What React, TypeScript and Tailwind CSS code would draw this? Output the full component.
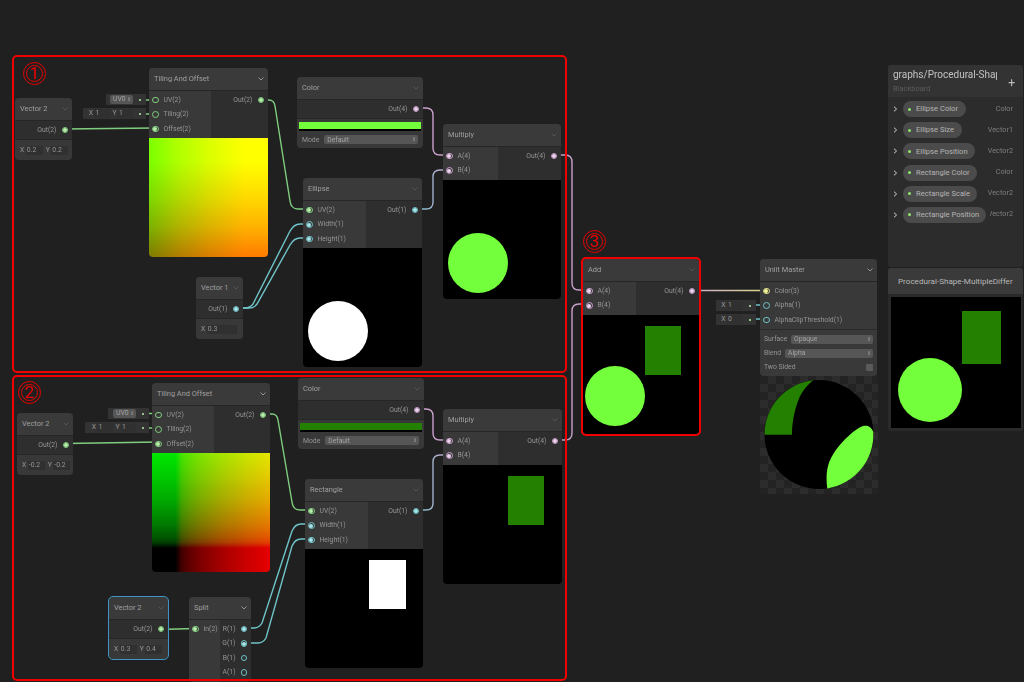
import type { ReactNode } from 'react';

type PortColor = 'green' | 'cyan' | 'pink' | 'yellow';
type PortDef = { label: string; color: PortColor; on?: boolean };

const ringClass: Record<PortColor, string> = {
    green: 'border-[#7fce7f]',
    cyan: 'border-[#6fc4c9]',
    pink: 'border-[#c9a0cc]',
    yellow: 'border-[#d8d884]',
};

const dotClass: Record<PortColor, string> = {
    green: 'bg-[#b7f0a8]',
    cyan: 'bg-[#a5e6ea]',
    pink: 'bg-[#eed2f0]',
    yellow: 'bg-[#f5f59a]',
};

function Port({ color, on }: { color: PortColor; on?: boolean }) {
    return (
        <span className={`flex h-[6.5px] w-[6.5px] shrink-0 items-center justify-center rounded-full border ${ringClass[color]}`}>
            {on && <span className={`h-[4px] w-[4px] rounded-full ${dotClass[color]}`} />}
        </span>
    );
}

function PortRow({ port, side }: { port: PortDef; side: 'in' | 'out' }) {
    return (
        <div className={`flex h-[14.4px] items-center gap-[5px] ${side === 'in' ? 'pl-[3px]' : 'justify-end pr-[4px]'}`}>
            {side === 'in' && <Port color={port.color} on={port.on} />}
            <span className="whitespace-nowrap">{port.label}</span>
            {side === 'out' && <Port color={port.color} on={port.on} />}
        </div>
    );
}

function Chevron({ dim }: { dim?: boolean }) {
    return (
        <svg width="6" height="4" viewBox="0 0 6 4" className={`shrink-0 ${dim ? 'text-[#5c5c5c]' : 'text-[#a8a8a8]'}`}>
            <path d="M0.5 0.5 L3 3 L5.5 0.5" fill="none" stroke="currentColor" strokeWidth="0.8" />
        </svg>
    );
}

function Node({
    title,
    className,
    leftWidth,
    inputs = [],
    outputs = [],
    dim,
    children,
}: {
    title: string;
    className: string;
    leftWidth?: string;
    inputs?: PortDef[];
    outputs?: PortDef[];
    dim?: boolean;
    children?: ReactNode;
}) {
    return (
        <div className={`absolute overflow-hidden rounded-[4px] bg-[#2e2e2e] text-[6.8px] text-[#969696] ${className}`}>
            <div className="flex h-[22px] items-center justify-between bg-[#3a3a3a] pl-[5px] pr-[4px] text-[7.4px] text-[#a0a0a0]">
                <span className="whitespace-nowrap">{title}</span>
                <Chevron dim={dim} />
            </div>
            <div className="flex border-t border-[#262626]">
                {inputs.length > 0 && (
                    <div className={`shrink-0 bg-[#393939] py-[2px] ${leftWidth ?? ''}`}>
                        {inputs.map((p) => (
                            <PortRow key={p.label} port={p} side="in" />
                        ))}
                    </div>
                )}
                <div className="min-w-0 flex-1 py-[2px]">
                    {outputs.map((p) => (
                        <PortRow key={p.label} port={p} side="out" />
                    ))}
                </div>
            </div>
            {children}
        </div>
    );
}

function NumField({ label, value, width }: { label: string; value: string; width: string }) {
    return (
        <div className="flex items-center gap-[1.5px]">
            <span>{label}</span>
            <span className={`flex h-[9px] items-center bg-[#303030] pl-[1px] ${width}`}>{value}</span>
        </div>
    );
}

function VectorProps({ fields, width }: { fields: [string, string][]; width: string }) {
    return (
        <div className="flex h-[21px] items-center gap-[3px] border-t border-[#262626] bg-[#383838] pl-[5px]">
            {fields.map(([label, value]) => (
                <NumField key={label} label={label} value={value} width={width} />
            ))}
        </div>
    );
}

function InlineInput({ className, children }: { className: string; children: ReactNode }) {
    return (
        <div className={`absolute flex h-[11px] items-center justify-end gap-[2px] bg-[#333333] pr-[5px] text-[6.8px] text-[#969696] ${className}`}>
            {children}
            <span className="ml-[4px] h-[2px] w-[2px] rounded-full bg-[#b7f0a8]" />
        </div>
    );
}

function Dropdown({ label, className }: { label: string; className: string }) {
    return (
        <div className={`flex h-[9px] items-center justify-between rounded-[2px] bg-[#565656] pl-[3px] pr-[2px] text-[6.8px] text-[#a4a4a4] ${className}`}>
            <span>{label}</span>
            <span className="text-[5px] leading-none">⇕</span>
        </div>
    );
}

function ColorBody({ bar }: { bar: string }) {
    return (
        <div className="border-t border-[#262626] bg-[#383838] px-[2px] pt-[3px]">
            <div className={`box-content h-[7px] border-b-2 border-black ${bar}`} />
            <div className="flex h-[17px] items-center gap-[5px] pl-[3px]">
                <span>Mode</span>
                <Dropdown label="Default" className="w-[94px]" />
            </div>
        </div>
    );
}

function Badge({ n, className }: { n: string; className: string }) {
    return (
        <div className={`absolute flex h-[23px] w-[23px] items-center justify-center rounded-full border-[4px] border-double border-[#e80000] text-[17px] leading-none text-[#f00000] ${className}`}>
            {n}
        </div>
    );
}

function RedBox({ className }: { className: string }) {
    return <div className={`pointer-events-none absolute rounded-[5px] border-2 border-[#f00000] ${className}`} />;
}

// node width varies by a px or two, the node clips the extra
function ShapePreview({ children }: { children: ReactNode }) {
    return (
        <svg width="120" height="119" viewBox="0 0 120 119" className="block bg-black">
            {children}
        </svg>
    );
}

function Wires() {
    return (
        <svg className="absolute left-0 top-0" width="1024" height="682" fill="none" strokeWidth="1.4" strokeLinecap="round">
            <defs>
                <linearGradient id="cp1" gradientUnits="userSpaceOnUse" x1="414" y1="0" x2="449" y2="0">
                    <stop offset="0" stopColor="#6fc4c9" />
                    <stop offset="1" stopColor="#c9a0cc" />
                </linearGradient>
                <linearGradient id="py" gradientUnits="userSpaceOnUse" x1="692" y1="0" x2="766" y2="0">
                    <stop offset="0" stopColor="#cfa8d0" />
                    <stop offset="1" stopColor="#d8d884" />
                </linearGradient>
            </defs>
            <g stroke="#7fce7f">
                <path d="M64 129 L155 128" />
                <path d="M261 100 H269 Q274 100 275 106 L290 201 Q291 209 298 209 H309" />
                <path d="M142 100 H156 M142 114 H156" />
                <path d="M66 443.5 L158 442" />
                <path d="M263 414 H272 Q277 414 278 420 L292 502 Q293 510 300 510 H311" />
                <path d="M144 413.5 H159 M144 428 H159" />
                <path d="M159 629.5 L195 628.5" />
            </g>
            <g stroke="#c9a0cc">
                <path d="M416 108 H426 Q433 108 433 115 V148 Q433 155 440 155 H449" />
                <path d="M554 155 H565 Q572 155 572 162 V283 Q572 290 579 290 H587" />
                <path d="M554 440 H565 Q572 440 572 433 V311 Q572 304 579 304 H587" />
                <path d="M417 409 H426 Q433 409 433 416 V433 Q433 440 440 440 H449" />
            </g>
            <path d="M414 209 H426 Q433 209 433 202 V177 Q433 170 440 170 H449" stroke="url(#cp1)" />
            <path d="M416 510 H426 Q433 510 433 503 V462 Q433 455 440 455 H449" stroke="url(#cp1)" />
            <path d="M692 290.5 H766" stroke="url(#py)" />
            <g stroke="#6fc4c9">
                <path d="M236 308 H245 Q250 308 253 304 L290 231 Q294 224 300 224 H309" />
                <path d="M236 308 H249 Q254 308 257 304 L290 245 Q294 238 300 238 H309" />
                <path d="M244 628 H254 Q259 628 262 623 L292 531 Q295 524 301 524 H311" />
                <path d="M244 643 H258 Q263 643 266 638 L292 546 Q295 539 301 539 H311" />
                <path d="M750 305 H766 M750 319 H766" />
            </g>
        </svg>
    );
}

function SpherePreview() {
    return (
        <svg width="118" height="118" viewBox="760 377 118 118">
            <circle cx="819" cy="435.5" r="54.5" fill="#000" />
            <path d="M764.6 435.7 H792 C792 420 797 400 803.3 391.7 C806.5 387 810 384 813.5 381.3 A54.5 54.5 0 0 0 764.6 435.7 Z" fill="#238000" />
            <path d="M827.3 489.4 C825.5 475 827 465 833.3 455 C838 447 851 433 860 428.3 C863 426.5 867 426 870 428.3 C871.5 429.5 872.7 431.5 873.3 433 A54.5 54.5 0 0 1 827.3 489.4 Z" fill="#74ff3d" />
        </svg>
    );
}

const bbRows = [
    { name: 'Ellipse Color', type: 'Color', pill: 'w-[63px]', clip: '' },
    { name: 'Ellipse Size', type: 'Vector1', pill: 'w-[59px]', clip: '' },
    { name: 'Ellipse Position', type: 'Vector2', pill: 'w-[72px]', clip: '' },
    { name: 'Rectangle Color', type: 'Color', pill: 'w-[74px]', clip: '' },
    { name: 'Rectangle Scale', type: 'Vector2', pill: 'w-[74px]', clip: '' },
    { name: 'Rectangle Position', type: 'Vector2', pill: 'w-[83px]', clip: 'ml-[4px]' },
];

function Blackboard() {
    return (
        <div className="h-[202px] rounded-[3px] bg-[#2c2c2c]">
            <div className="relative h-[32px] rounded-t-[3px] bg-[#333333] pl-[5px] pt-[3px]">
                <div className="w-[104px] overflow-hidden whitespace-nowrap text-[10px] leading-[14px] text-[#c2c2c2]">graphs/Procedural-Shape</div>
                <div className="text-[7.5px] leading-[14px] text-[#5c5c5c]">Blackboard</div>
                <span className="absolute right-[8px] top-[12px] text-[12px] leading-[12px] text-[#bdbdbd]">+</span>
            </div>
            <div className="flex flex-col gap-[5.2px] pl-[5px] pr-[10px] pt-[4px]">
                {bbRows.map((r) => (
                    <div key={r.name} className="flex h-[16px] items-center text-[7.6px]">
                        <svg width="5" height="6" viewBox="0 0 5 6" className="mr-[5px] shrink-0 text-[#d0d0d0]">
                            <path d="M1 0.7 L3.6 3 L1 5.3" fill="none" stroke="currentColor" strokeWidth="1" />
                        </svg>
                        <div className={`flex h-[16px] shrink-0 items-center gap-[5px] rounded-full bg-[#4b4b4b] pl-[5px] text-[#b4b4b4] ${r.pill}`}>
                            <span className="h-[3px] w-[3px] shrink-0 rounded-full bg-[#8fe86a]" />
                            <span className="whitespace-nowrap">{r.name}</span>
                        </div>
                        <div className={`min-w-0 flex-1 overflow-hidden whitespace-nowrap text-right text-[7.3px] text-[#7e7e7e] ${r.clip}`} dir="rtl">{r.type}</div>
                    </div>
                ))}
            </div>
        </div>
    );
}

function MainPreview() {
    return (
        <div className="overflow-hidden rounded-[3px] bg-[#2a2a2a]">
            <div className="flex h-[26px] items-center overflow-hidden bg-[#3a3a3a] pl-[10px] pr-[8px]">
                <span className="w-full overflow-hidden whitespace-nowrap text-[8.1px] text-[#b8b8b8]">Procedural-Shape-MultipleDiffer</span>
            </div>
            <div className="p-[3px]">
                <svg width="130" height="131" viewBox="0 0 130 131" className="block bg-black">
                    <rect x="71" y="14" width="39" height="53" fill="#238000" />
                    <circle cx="39" cy="93" r="32" fill="#74ff3d" />
                </svg>
            </div>
        </div>
    );
}

const lblGreen = (label: string, on?: boolean): PortDef => ({ label, color: 'green', on });
const lblCyan = (label: string, on?: boolean): PortDef => ({ label, color: 'cyan', on });
const lblPink = (label: string, on?: boolean): PortDef => ({ label, color: 'pink', on });

export default function App() {
    return (
        <div className="relative h-[682px] w-[1024px] overflow-hidden bg-[#202020] font-['Roboto',sans-serif]">
            <Wires />

            {/* group 1 */}
            <InlineInput className="left-[106px] top-[94px] w-[40px]">
                <Dropdown label="UV0" className="w-[23px]" />
            </InlineInput>
            <InlineInput className="left-[83px] top-[108px] w-[63px]">
                <NumField label="X" value="1" width="w-[16px]" />
                <NumField label="Y" value="1" width="w-[15px]" />
            </InlineInput>
            <Node title="Vector 2" dim className="left-[15px] top-[98px] w-[57px]" outputs={[lblGreen('Out(2)', true)]}>
                <VectorProps fields={[['X', '0.2'], ['Y', '0.2']]} width="w-[17px]" />
            </Node>
            <Node
                title="Tiling And Offset"
                className="left-[149px] top-[68px] w-[119px]"
                leftWidth="w-[62px]"
                inputs={[lblGreen('UV(2)'), lblGreen('Tiling(2)'), lblGreen('Offset(2)', true)]}
                outputs={[lblGreen('Out(2)', true)]}
            >
                <div className="relative h-[119px] bg-[linear-gradient(to_right,#7b0000,#b10000_25%,#d90000_50%,#ff0000_80%)]">
                    <div className="absolute inset-0 bg-[linear-gradient(to_top,#007b00,#00b100_25%,#00d900_50%,#00ff00_80%)] mix-blend-screen" />
                </div>
            </Node>
            <Node title="Color" dim className="left-[297px] top-[77px] w-[126px]" outputs={[lblPink('Out(4)', true)]}>
                <ColorBody bar="bg-[#74ff3d]" />
            </Node>
            <Node
                title="Multiply"
                dim
                className="left-[443px] top-[124px] w-[118px]"
                leftWidth="w-[55px]"
                inputs={[lblPink('A(4)', true), lblPink('B(4)', true)]}
                outputs={[lblPink('Out(4)', true)]}
            >
                <ShapePreview>
                    <circle cx="35" cy="83" r="30" fill="#74ff3d" />
                </ShapePreview>
            </Node>
            <Node
                title="Ellipse"
                dim
                className="left-[303px] top-[178px] w-[119px]"
                leftWidth="w-[63px]"
                inputs={[lblGreen('UV(2)', true), lblCyan('Width(1)', true), lblCyan('Height(1)', true)]}
                outputs={[lblCyan('Out(1)', true)]}
            >
                <ShapePreview>
                    <circle cx="35" cy="83" r="30" fill="#fff" />
                </ShapePreview>
            </Node>
            <Node title="Vector 1" dim className="left-[196px] top-[277px] w-[47px]" outputs={[lblCyan('Out(1)', true)]}>
                <VectorProps fields={[['X', '0.3']]} width="w-[30px]" />
            </Node>

            {/* group 2 */}
            <InlineInput className="left-[108px] top-[408px] w-[41px]">
                <Dropdown label="UV0" className="w-[23px]" />
            </InlineInput>
            <InlineInput className="left-[85px] top-[422px] w-[64px]">
                <NumField label="X" value="1" width="w-[16px]" />
                <NumField label="Y" value="1" width="w-[15px]" />
            </InlineInput>
            <Node title="Vector 2" dim className="left-[17px] top-[413px] w-[56px]" outputs={[lblGreen('Out(2)', true)]}>
                <VectorProps fields={[['X', '-0.2'], ['Y', '-0.2']]} width="w-[17px]" />
            </Node>
            <Node
                title="Tiling And Offset"
                className="left-[152px] top-[383px] w-[118px]"
                leftWidth="w-[62px]"
                inputs={[lblGreen('UV(2)'), lblGreen('Tiling(2)'), lblGreen('Offset(2)', true)]}
                outputs={[lblGreen('Out(2)', true)]}
            >
                <div className="relative h-[119px] bg-[linear-gradient(to_right,#000000_20%,#410000_25%,#590000_30%,#7a0000_40%,#a80000_60%,#ca0000_80%,#e60000)]">
                    <div className="absolute inset-0 bg-[linear-gradient(to_top,#000000_20%,#004100_25%,#005900_30%,#007a00_40%,#00a800_60%,#00ca00_80%,#00e600)] mix-blend-screen" />
                </div>
            </Node>
            <Node title="Color" dim className="left-[298px] top-[378px] w-[126px]" outputs={[lblPink('Out(4)', true)]}>
                <ColorBody bar="bg-[#238000]" />
            </Node>
            <Node
                title="Multiply"
                dim
                className="left-[443px] top-[409px] w-[119px]"
                leftWidth="w-[55px]"
                inputs={[lblPink('A(4)', true), lblPink('B(4)', true)]}
                outputs={[lblPink('Out(4)', true)]}
            >
                <ShapePreview>
                    <rect x="65" y="11" width="36" height="49" fill="#238000" />
                </ShapePreview>
            </Node>
            <Node
                title="Rectangle"
                dim
                className="left-[305px] top-[479px] w-[118px]"
                leftWidth="w-[63px]"
                inputs={[lblGreen('UV(2)', true), lblCyan('Width(1)', true), lblCyan('Height(1)', true)]}
                outputs={[lblCyan('Out(1)', true)]}
            >
                <ShapePreview>
                    <rect x="64" y="11" width="37" height="49" fill="#fff" />
                </ShapePreview>
            </Node>
            <Node
                title="Vector 2"
                dim
                className="left-[109px] top-[597px] w-[59px] outline outline-[1.5px] outline-[#3f94c4]"
                outputs={[lblGreen('Out(2)', true)]}
            >
                <VectorProps fields={[['X', '0.3'], ['Y', '0.4']]} width="w-[17px]" />
            </Node>
            <Node
                title="Split"
                className="left-[189px] top-[597px] w-[62px]"
                leftWidth="w-[31px]"
                inputs={[lblGreen('In(2)', true)]}
                outputs={[lblCyan('R(1)', true), lblCyan('G(1)', true), lblCyan('B(1)'), lblCyan('A(1)')]}
            />

            {/* add + master */}
            <Node
                title="Add"
                dim
                className="left-[583px] top-[259px] w-[116px]"
                leftWidth="w-[53px]"
                inputs={[lblPink('A(4)', true), lblPink('B(4)', true)]}
                outputs={[lblPink('Out(4)', true)]}
            >
                <ShapePreview>
                    <rect x="62" y="11" width="36" height="49" fill="#238000" />
                    <circle cx="32" cy="81" r="30" fill="#74ff3d" />
                </ShapePreview>
            </Node>
            <InlineInput className="left-[716px] top-[300px] w-[40px]">
                <NumField label="X" value="1" width="w-[16px]" />
            </InlineInput>
            <InlineInput className="left-[716px] top-[314px] w-[40px]">
                <NumField label="X" value="0" width="w-[16px]" />
            </InlineInput>
            <div className="absolute left-[760px] top-[259px] flex w-[118px] flex-col">
                <Node
                    title="Unlit Master"
                    className="static! w-[117px]"
                    leftWidth="w-full"
                    inputs={[
                        { label: 'Color(3)', color: 'yellow', on: true },
                        lblCyan('Alpha(1)'),
                        lblCyan('AlphaClipThreshold(1)'),
                    ]}
                >
                    <div className="border-t border-[#2a2a2a] bg-[#393939] px-[4px] py-[2px]">
                        <div className="flex h-[14px] items-center justify-between">
                            <span>Surface</span>
                            <Dropdown label="Opaque" className="w-[82px]" />
                        </div>
                        <div className="flex h-[14px] items-center justify-between">
                            <span>Blend</span>
                            <Dropdown label="Alpha" className="w-[88px]" />
                        </div>
                        <div className="flex h-[14px] items-center justify-between">
                            <span>Two Sided</span>
                            <span className="h-[7px] w-[7px] rounded-[1px] bg-[#5a5a5a]" />
                        </div>
                    </div>
                </Node>
                <div className="h-[118px] bg-[conic-gradient(#2c2c2c_25%,#232323_0_50%,#2c2c2c_0_75%,#232323_0)] bg-size-[16px_16px]">
                    <SpherePreview />
                </div>
            </div>

            <div className="absolute left-[888px] top-[65px] flex w-[135px] flex-col gap-[1px]">
                <Blackboard />
                <MainPreview />
            </div>

            <RedBox className="left-[12px] top-[55px] h-[318px] w-[555px]" />
            <RedBox className="left-[12px] top-[375px] h-[306px] w-[555px]" />
            <RedBox className="left-[581px] top-[257px] h-[179px] w-[120px]" />
            <Badge n="1" className="left-[23px] top-[62px]" />
            <Badge n="2" className="left-[18px] top-[381px]" />
            <Badge n="3" className="left-[583px] top-[230px]" />
        </div>
    );
}
